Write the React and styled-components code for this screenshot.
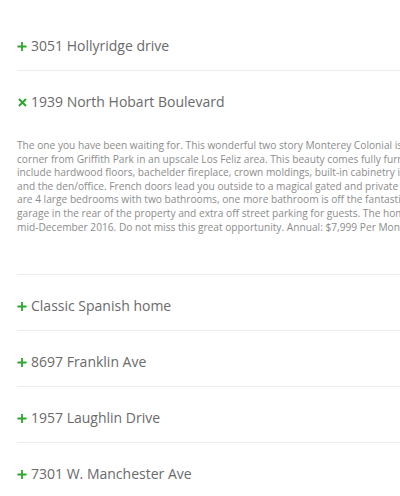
import React, { useState } from 'react';
import styled, { createGlobalStyle } from 'styled-components';

const GlobalStyle = createGlobalStyle`
  html, body {
    margin: 0;
    padding: 0;
    background: #fff;
    overflow: hidden;
  }
  body {
    font-family: 'Open Sans', 'Liberation Sans', sans-serif;
  }
`;

const Wrapper = styled.div`
  width: 400px;
  height: 496px;
  overflow: hidden;
  padding: 15px 0 0 17px;
  box-sizing: border-box;
`;

const List = styled.ul`
  list-style: none;
  margin: 0;
  padding: 0;
  width: 560px;
`;

const Item = styled.li`
  border-top: ${(props) => (props.first ? 'none' : '1px solid #ececec')};
`;

const Header = styled.button`
  display: flex;
  align-items: center;
  gap: 4px;
  width: 100%;
  padding: 21px 0 14px;
  margin: 0;
  border: none;
  background: none;
  cursor: pointer;
  text-align: left;
  font-family: inherit;
`;

const Icon = styled.span`
  display: flex;
  align-items: center;
  justify-content: center;
  width: 10px;
  height: 20px;
`;

const Title = styled.span`
  font-size: 14px;
  line-height: 20px;
  color: #6a6a6a;
  white-space: nowrap;
`;

const Body = styled.div`
  padding: 13px 0 40px;
  font-size: 10.18px;
  line-height: 13.6px;
  color: #8c8c8c;
`;

const Line = styled.div`
  white-space: nowrap;
`;

const PlusIcon = () => (
  <svg width="11" height="11" viewBox="0 0 11 11">
    <path d="M5.5 0.5v10M0.5 5.5h10" stroke="#2ea62e" strokeWidth="2" />
  </svg>
);

const CloseIcon = () => (
  <svg width="9" height="9" viewBox="0 0 9 9">
    <path d="M1 1l7 7M8 1l-7 7" stroke="#2ea62e" strokeWidth="2" />
  </svg>
);

const description = [
  'The one you have been waiting for. This wonderful two story Monterey Colonial is just around the',
  'corner from Griffith Park in an upscale Los Feliz area. This beauty comes fully furnished. Features',
  'include hardwood floors, bachelder fireplace, crown moldings, built-in cabinetry in the living room',
  'and the den/office. French doors lead you outside to a magical gated and private garden. Upstairs',
  'are 4 large bedrooms with two bathrooms, one more bathroom is off the fantastic den. Detached',
  'garage in the rear of the property and extra off street parking for guests. The home is available',
  'mid-December 2016. Do not miss this great opportunity. Annual: $7,999 Per Month.',
];

const listings = [
  { id: 1, title: '3051 Hollyridge drive' },
  { id: 2, title: '1939 North Hobart Boulevard', lines: description },
  { id: 3, title: 'Classic Spanish home' },
  { id: 4, title: '8697 Franklin Ave' },
  { id: 5, title: '1957 Laughlin Drive' },
  { id: 6, title: '7301 W. Manchester Ave' },
];

const App = () => {
  const [openId, setOpenId] = useState(2);

  return (
    <Wrapper>
      <GlobalStyle />
      <List>
        {listings.map((item, index) => {
          const open = item.id === openId;
          return (
            <Item key={item.id} first={index === 0}>
              <Header onClick={() => setOpenId(open ? null : item.id)}>
                <Icon>{open ? <CloseIcon /> : <PlusIcon />}</Icon>
                <Title>{item.title}</Title>
              </Header>
              {open && item.lines && (
                <Body>
                  {item.lines.map((text) => (
                    <Line key={text}>{text}</Line>
                  ))}
                </Body>
              )}
            </Item>
          );
        })}
      </List>
    </Wrapper>
  );
};

export default App;
